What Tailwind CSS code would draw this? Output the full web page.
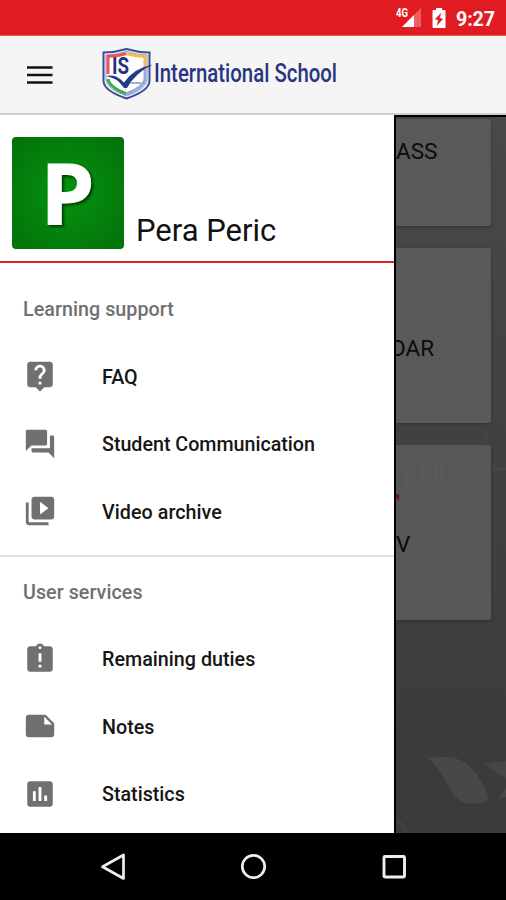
<!DOCTYPE html>
<html lang="en">
<head>
<meta charset="utf-8">
<title>International School</title>
<script src="https://cdn.jsdelivr.net/npm/@tailwindcss/browser@4"></script>
</head>
<body class="w-[506px] h-[900px] overflow-hidden bg-black font-[Roboto,sans-serif]">
<div class="flex flex-col w-[506px] h-[900px]">
  <header class="shrink-0">
    <div class="h-9 bg-[#e11b22] flex items-center justify-end pr-[11px] text-white border-b border-[#ea5a55]">
      <svg class="w-[28px] h-[22px] mt-[2px] mr-[10px]" viewBox="0 0 28 22">
        <path d="M27 0v19H8z" fill="#fff" opacity=".3"/>
        <path d="M20 7v12H8z" fill="#fff"/>
        <text x="2" y="9" font-family="Roboto" font-weight="700" font-size="12" fill="#fff" textLength="12" lengthAdjust="spacingAndGlyphs">4G</text>
      </svg>
      <svg class="w-[14px] h-[22px] mr-[10px]" viewBox="0 0 14 22">
        <path d="M4 1h6v2h2.500a1 1 0 0 1 1 1v16a1 1 0 0 1-1 1h-11a1 1 0 0 1-1-1V4a1 1 0 0 1 1-1H4z" fill="#fff"/>
        <path d="M9.500 5.500L3 12l3.200 1.300L4.500 19l6.500-7-3.400-1.300z" fill="#e11b22"/>
      </svg>
      <span class="text-[19.700px] leading-[36px] font-bold pt-[4px] tracking-[-0.100px]">9:27</span>
    </div>
    <div class="h-[79px] bg-[#f5f5f5] border-b-2 border-[#cfcfcf] flex items-center pl-[27px]">
      <svg class="w-[26px] h-[18px] mr-[49px]" viewBox="0 0 26 18"><path d="M0 1.500h25.500M0 9h25.500M0 16.500h25.500" stroke="#111" stroke-width="2.300"/></svg>
      <svg class="w-[52px] h-[54px] -mt-px" viewBox="0 0 52 54">
        <path d="M1.500 5.500Q13 5.500 24.500 2Q36 5.500 47.500 5.500V34Q47 44 24.500 51.500Q2 44 1.500 34Z" fill="#f5f5f5" stroke="#3d4f94" stroke-width="2"/>
        <path d="M4 8Q14 8 24.500 4.500Q35 8 45 8V33Q44 42 24.500 49Q5 42 4 33Z" fill="#fff" stroke="#8c9ac8" stroke-width="1"/>
        <path d="M6 27V9.500Q15 9.500 24.500 6.500" fill="none" stroke="#e9545a" stroke-width="3"/>
        <path d="M24.500 6.500Q34 9.500 43 9.500V20" fill="none" stroke="#f6bd50" stroke-width="3"/>
        <path d="M6 32Q7 40 24.500 47" fill="none" stroke="#42aa57" stroke-width="3"/>
        <path d="M24.500 47Q42 40 43 32V22" fill="none" stroke="#96a9dc" stroke-width="3"/>
        <path d="M4 29Q10 28 14 29.500Q19 32 22 35.500Q32 21 51 17.500Q34 25 25 41Q22 42 20.500 39Q15 31 4 29Z" fill="#243a86"/>
        <text x="10" y="27" font-family="Roboto" font-weight="700" font-size="23" fill="#1d3282" textLength="17" lengthAdjust="spacingAndGlyphs">IS</text>
        <path d="M29 36h10" stroke="#8790b5" stroke-width="1.500"/>
      </svg>
      <svg class="w-[200px] h-[36px] -mt-px overflow-visible" viewBox="0 0 200 36">
        <text x="0" y="26" font-family="Roboto" font-weight="500" font-size="25" fill="#283580" textLength="183" lengthAdjust="spacingAndGlyphs">International School</text>
      </svg>
    </div>
  </header>
  <main class="flex h-[718px] shrink-0">
    <nav class="w-[394px] shrink-0 bg-white flex flex-col">
      <div class="h-[148px] shrink-0 border-b-[2px] border-[#dc2429] flex items-end pl-3 pb-3">
        <div class="w-28 h-28 rounded-[4px] bg-radial from-[#04930e] to-[#03710a] flex items-center justify-center">
          <svg class="w-28 h-28 overflow-visible drop-shadow-[2px_2px_1px_#033f08]" viewBox="0 0 112 112"><text x="28.500" y="87" font-family="Open Sans" font-weight="700" font-size="85" fill="#fff" stroke="#fff" stroke-width="1" textLength="54" lengthAdjust="spacingAndGlyphs">P</text></svg>
        </div>
        <div class="ml-[12px] -mb-px text-[31px] leading-[38px] text-[#111]">Pera Peric</div>
      </div>
      <section class="h-[294px] shrink-0 border-b-2 border-[#e2e2e2] pt-[14px]">
        <h2 class="h-[66px] pl-[23px] leading-[66px] text-[19.700px] font-medium tracking-[0.050px] text-[#707070]">Learning support</h2>
        <ul>
          <li class="h-[67.500px] flex items-center pl-[23px] gap-[45px]">
            <svg class="size-[34px] -mt-px fill-[#707070]" viewBox="0 0 24 24"><path d="M19 2H5c-1.110 0-2 .9-2 2v14c0 1.100.89 2 2 2h4l3 3 3-3h4c1.100 0 2-.9 2-2V4c0-1.100-.9-2-2-2zm-6 16h-2v-2h2v2zm2.070-7.750l-.9.920C13.450 11.900 13 12.500 13 14h-2v-.5c0-1.100.45-2.100 1.170-2.830l1.240-1.260c.37-.36.590-.86.590-1.410 0-1.100-.9-2-2-2s-2 .9-2 2H8c0-2.210 1.790-4 4-4s4 1.790 4 4c0 .88-.36 1.680-.93 2.250z"/></svg>
            <span class="pt-[2px] text-[19.700px] font-medium text-[#161616]">FAQ</span>
          </li>
          <li class="h-[67.500px] flex items-center pl-[23px] gap-[45px]">
            <svg class="size-[34px] -mt-px fill-[#707070]" viewBox="0 0 24 24"><path d="M21 6h-2v9H6v2c0 .55.45 1 1 1h11l4 4V7c0-.55-.45-1-1-1zm-4 6V3c0-.55-.45-1-1-1H3c-.55 0-1 .45-1 1v14l4-4h10c.55 0 1-.45 1-1z"/></svg>
            <span class="pt-[2px] text-[19.700px] font-medium tracking-[-0.020px] text-[#161616]">Student Communication</span>
          </li>
          <li class="h-[67.500px] flex items-center pl-[23px] gap-[45px]">
            <svg class="size-[34px] -mt-px fill-[#707070]" viewBox="0 0 24 24"><path d="M4 6H2v14c0 1.100.9 2 2 2h14v-2H4V6zm16-4H8c-1.100 0-2 .9-2 2v12c0 1.100.9 2 2 2h12c1.100 0 2-.9 2-2V4c0-1.100-.9-2-2-2zm-8 12.500v-9l6 4.500-6 4.500z"/></svg>
            <span class="pt-[2px] text-[19.700px] font-medium tracking-[0.050px] text-[#161616]">Video archive</span>
          </li>
        </ul>
      </section>
      <section class="pt-[2px]">
        <h2 class="h-[66px] pl-[23px] leading-[67px] text-[19.700px] font-medium tracking-[0.050px] text-[#707070]">User services</h2>
        <ul>
          <li class="h-[67.500px] flex items-center pl-[23px] gap-[45px]">
            <svg class="size-[34px] fill-[#707070]" viewBox="0 0 24 24"><path d="M19 3h-4.180C14.400 1.840 13.300 1 12 1c-1.300 0-2.400.84-2.820 2H5c-1.100 0-2 .9-2 2v14c0 1.100.9 2 2 2h14c1.100 0 2-.9 2-2V5c0-1.100-.9-2-2-2zm-6 15h-2v-2h2v2zm0-4h-2V8h2v6zm-1-9c-.55 0-1-.45-1-1s.45-1 1-1 1 .45 1 1-.45 1-1 1z"/></svg>
            <span class="pt-[2px] text-[19.700px] font-medium tracking-[0.020px] text-[#161616]">Remaining duties</span>
          </li>
          <li class="h-[67.500px] flex items-center pl-[23px] gap-[45px]">
            <svg class="size-[34px] fill-[#707070]" viewBox="0 0 24 24"><path d="M22 10l-6-6H4c-1.100 0-2 .9-2 2v12.010c0 1.100.9 1.990 2 1.990l16-.01c1.100 0 2-.89 2-1.990v-8zm-7-4.500l5.500 5.500H15V5.500z"/></svg>
            <span class="pt-[3px] text-[19.700px] font-medium text-[#161616]">Notes</span>
          </li>
          <li class="h-[67.500px] flex items-center pl-[23px] gap-[45px]">
            <svg class="size-[34px] fill-[#707070]" viewBox="0 0 24 24"><path d="M19 3H5c-1.100 0-2 .9-2 2v14c0 1.100.9 2 2 2h14c1.100 0 2-.9 2-2V5c0-1.100-.9-2-2-2zM9 17H7v-7h2v7zm4 0h-2V7h2v10zm4 0h-2v-4h2v4z"/></svg>
            <span class="pt-[2px] text-[19.700px] font-medium text-[#161616]">Statistics</span>
          </li>
        </ul>
      </section>
    </nav>
    <aside class="relative flex-1 border-l-2 border-t-2 border-black bg-linear-to-b from-[#494949] via-[#404040] to-[#3a3a3a] overflow-hidden text-[22.500px] text-[#0b0b0b]">
      <svg class="absolute left-0 top-0 w-[110px] h-[716px]" viewBox="396 117 110 716">
        <path d="M428 758Q443 756 455 758Q471 763 480 780Q489 794 488 800Q484 805 465 803Q455 800 447 784Q439 768 428 758Z" fill="#484848"/>
        <path d="M484 764L506 761V779Q496 771 484 764ZM497 800Q502 793 506 788V797Z" fill="#464646"/>
        <path d="M396 816L412 833H406L396 822Z" fill="#414141"/>
        <path d="M480 443Q487 441 486 430M492 468Q500 471 506 468" fill="none" stroke="#464646" stroke-width="3"/>
      </svg>
      <div class="relative flex flex-col gap-[22px] pt-[2px] w-[95px]">
        <div class="h-[107px] rounded-r-[2px] bg-[#595959] shadow-[0_1px_3px_#303030] pt-[17px] leading-[30px]">ASS</div>
        <div class="h-[175px] rounded-r-[2px] bg-[#595959] shadow-[0_1px_3px_#303030] pt-[85px] leading-[30px]"><span class="-ml-[5px]">DAR</span></div>
        <div class="h-[175px] rounded-r-[2px] bg-[#575757] shadow-[0_1px_3px_#303030] leading-[30px]">
          <svg class="w-[60px] h-[84px]" viewBox="0 0 60 84"><path d="M10 22v20M27 18v23M34 18v23M40 16v24M46 18v22" stroke="#5a5a5a" stroke-width="3"/><path d="M0 49h2.500l1 3-1 4-2.500-4z" fill="#6a1424"/></svg>
          <div>V</div>
        </div>
      </div>
    </aside>
  </main>
  <footer class="h-[67px] shrink-0 bg-black flex items-center justify-between pl-[100px] pr-[98px]">
    <svg class="size-[28px]" viewBox="0 0 28 28"><path d="M23.500 2v23.500L2.500 13.800z" fill="none" stroke="#eee" stroke-width="2.700" stroke-linejoin="round"/></svg>
    <svg class="size-[28px]" viewBox="0 0 28 28"><circle cx="13.500" cy="13.500" r="11.200" fill="none" stroke="#eee" stroke-width="2.700"/></svg>
    <svg class="size-[28px]" viewBox="0 0 28 28"><rect x="4" y="3.500" width="20.500" height="20.500" rx="1" fill="none" stroke="#eee" stroke-width="2.900"/></svg>
  </footer>
</div>
</body>
</html>
